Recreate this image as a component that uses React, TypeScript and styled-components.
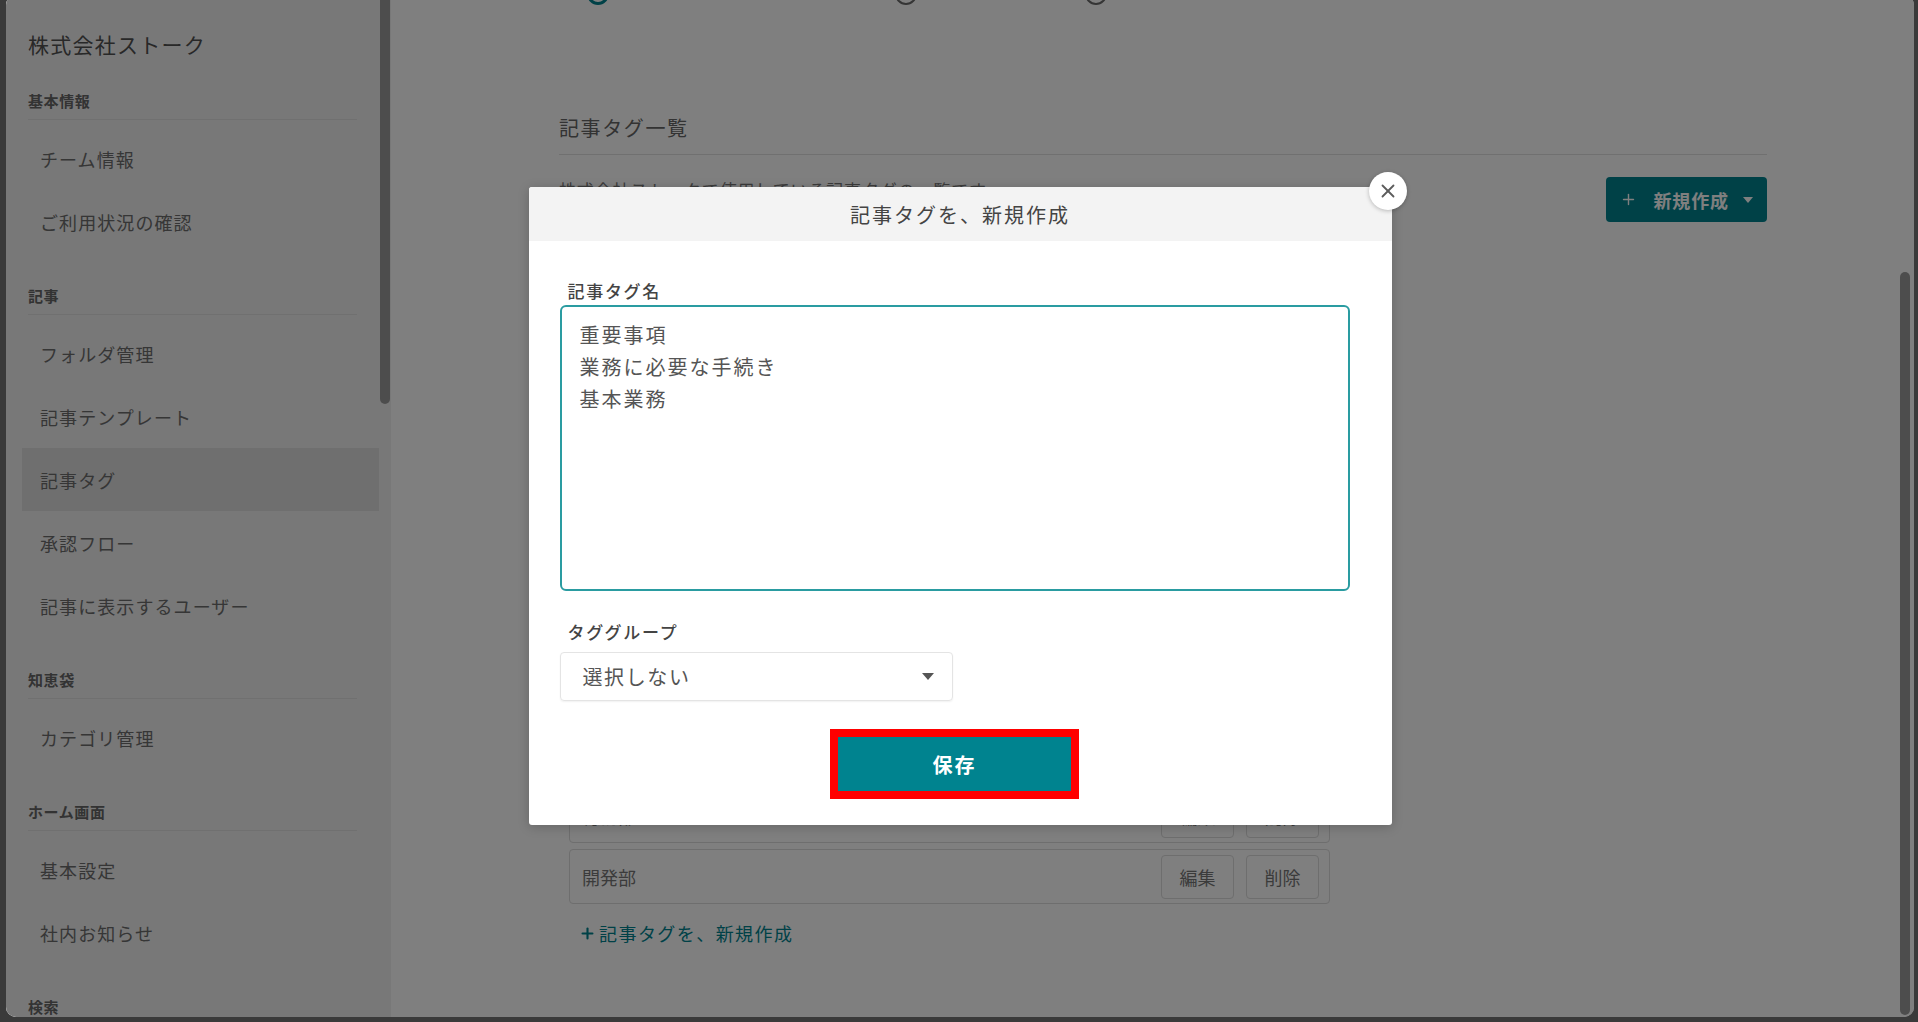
import React from "react";
import styled, { createGlobalStyle } from "styled-components";
import { Plus, X } from "lucide-react";

const GlobalStyle = createGlobalStyle`
  html, body {
    margin: 0;
    padding: 0;
  }
  body {
    background: #3a3a3a;
    font-family: "Noto Sans CJK JP", "Noto Sans", sans-serif;
    overflow: hidden;
  }
  * {
    box-sizing: border-box;
  }
`;

const Frame = styled.div`
  width: 1918px;
  height: 1022px;
  padding: 0 4px 5px 6px;
  overflow: hidden;
`;

const Window = styled.div`
  position: relative;
  display: flex;
  height: 1022px;
  margin-top: -5px;
  border-radius: 10px;
  overflow: hidden;
  background: #fff;
`;

/* ---------- sidebar ---------- */

const Sidebar = styled.aside`
  position: relative;
  flex: 0 0 385px;
  padding: 34px 12px 0 16px;
  background: #f0f0f0;
  overflow: hidden;
`;

const ScrollThumb = styled.div<{ $top: number; $height: number; $right: number }>`
  position: absolute;
  top: ${(p) => p.$top}px;
  right: ${(p) => p.$right}px;
  width: 10px;
  height: ${(p) => p.$height}px;
  border-radius: 5px;
  background: #9b9b9b;
`;

const Company = styled.div`
  padding-left: 6px;
  margin-bottom: 32px;
  font-size: 21px;
  line-height: 30px;
  color: #505050;
  letter-spacing: 0.06em;
`;

const Section = styled.section`
  & + & {
    margin-top: 33px;
  }
`;

const SectionLabel = styled.div`
  margin: 0 22px 0 6px;
  padding-bottom: 8px;
  font-size: 15px;
  font-weight: 700;
  line-height: 20px;
  color: #666;
  letter-spacing: 0.04em;
  border-bottom: 1px solid #e0e0e0;
`;

const NavList = styled.ul`
  list-style: none;
  margin: 0;
  padding: 7px 0 0;
`;

const NavItem = styled.li<{ $active?: boolean }>`
  display: flex;
  align-items: center;
  height: 63px;
  padding-left: 18px;
  font-size: 18px;
  color: #6c6c6c;
  letter-spacing: 0.06em;
  background: ${(p) => (p.$active ? "#dedede" : "transparent")};
`;

/* ---------- main ---------- */

const Main = styled.main`
  position: relative;
  flex: 1;
  padding-left: 168px;
`;

const Content = styled.div`
  width: 1208px;
`;

const RadioRow = styled.div`
  display: flex;
  align-items: center;
  height: 22px;
  margin-top: -12px;
  padding-left: 28px;
`;

const Radio = styled.span<{ $checked?: boolean }>`
  display: inline-block;
  width: 22px;
  height: 22px;
  border-radius: 50%;
  border: ${(p) => (p.$checked ? "3px solid #00838f" : "2px solid #6a6a6a")};
`;

const RadioText = styled.span<{ $width: number }>`
  width: ${(p) => p.$width}px;
  margin-left: 10px;
  font-size: 17px;
  color: #777;
  white-space: nowrap;
  transform: translateY(-11px);
`;

const Heading = styled.h2`
  margin: 109px 0 0;
  padding-bottom: 12px;
  font-size: 20px;
  font-weight: 400;
  line-height: 28px;
  color: #666;
  letter-spacing: 0.08em;
  border-bottom: 1px solid #e0e0e0;
`;

const ToolRow = styled.div`
  display: flex;
  justify-content: space-between;
  align-items: flex-start;
  padding-top: 22px;
`;

const Description = styled.p`
  margin: 1px 0 0;
  font-size: 17px;
  line-height: 24px;
  color: #777;
  letter-spacing: 0.05em;
`;

const CreateButton = styled.button`
  display: flex;
  align-items: center;
  height: 45px;
  padding: 0 14px;
  border: none;
  border-radius: 4px;
  background: #00838f;
  color: #fff;
  font-family: inherit;
  font-size: 18px;
  font-weight: 700;
  letter-spacing: 0.05em;

  span {
    margin: 0 14px 0 16px;
  }
`;

const Caret = styled.i<{ $color: string; $size: number }>`
  display: inline-block;
  width: 0;
  height: 0;
  border-left: ${(p) => p.$size}px solid transparent;
  border-right: ${(p) => p.$size}px solid transparent;
  border-top: ${(p) => p.$size + 1}px solid ${(p) => p.$color};
`;

const TagList = styled.div`
  display: flex;
  flex-direction: column;
  gap: 6px;
  margin-top: 505px;
  padding-left: 10px;
`;

const TagRow = styled.div`
  display: flex;
  align-items: center;
  justify-content: space-between;
  width: 761px;
  height: 55px;
  padding: 0 10px 0 12px;
  border: 1px solid #dcdcdc;
  border-radius: 4px;
  font-size: 18px;
  color: #777;
`;

const RowActions = styled.div`
  display: flex;
  gap: 12px;
`;

const RowButton = styled.button`
  width: 73px;
  height: 44px;
  border: 1px solid #dcdcdc;
  border-radius: 4px;
  background: #fff;
  font-family: inherit;
  font-size: 18px;
  color: #777;
`;

const AddLink = styled.div`
  display: flex;
  align-items: center;
  gap: 3px;
  margin-top: 17px;
  padding-left: 20px;
  font-size: 18px;
  line-height: 24px;
  color: #00838f;
  letter-spacing: 0.08em;
`;

/* ---------- modal ---------- */

const Overlay = styled.div`
  position: absolute;
  inset: 0;
  display: flex;
  align-items: center;
  justify-content: center;
  background: rgba(0, 0, 0, 0.5);
`;

const Modal = styled.div`
  position: relative;
  width: 863px;
  border-radius: 3px;
  background: #fff;
  box-shadow: 0 2px 12px rgba(0, 0, 0, 0.2);
`;

const CloseButton = styled.button`
  position: absolute;
  top: -15px;
  right: -15px;
  display: flex;
  align-items: center;
  justify-content: center;
  width: 38px;
  height: 38px;
  padding: 0;
  border: none;
  border-radius: 50%;
  background: #fff;
  color: #5c5c5c;
  box-shadow: 0 1px 4px rgba(0, 0, 0, 0.25);
`;

const ModalHeader = styled.div`
  display: flex;
  align-items: center;
  justify-content: center;
  height: 54px;
  border-radius: 3px 3px 0 0;
  background: #f3f3f3;
  font-size: 20px;
  color: #444;
  letter-spacing: 0.1em;
`;

const ModalBody = styled.div`
  width: 821px;
  padding: 38px 0 26px 31px;
`;

const FieldLabel = styled.label<{ $gap: number }>`
  display: block;
  margin-top: ${(p) => p.$gap}px;
  padding-left: 8px;
  font-size: 17px;
  font-weight: 500;
  line-height: 24px;
  color: #444;
  letter-spacing: 0.1em;
`;

const TagTextarea = styled.textarea`
  display: block;
  width: 790px;
  height: 286px;
  margin-top: 2px;
  padding: 12px 18px;
  border: 2px solid #2a9ca1;
  border-radius: 6px;
  outline: none;
  resize: none;
  font-family: inherit;
  font-size: 20px;
  line-height: 32px;
  color: #555;
  letter-spacing: 0.1em;
`;

const SelectBox = styled.div`
  display: flex;
  align-items: center;
  justify-content: space-between;
  width: 393px;
  height: 49px;
  margin-top: 8px;
  padding: 0 18px 0 22px;
  border: 1px solid #e4e4e4;
  border-radius: 4px;
  box-shadow: 0 1px 2px rgba(0, 0, 0, 0.06);
  font-size: 20px;
  color: #555;
  letter-spacing: 0.08em;
`;

const SaveArea = styled.div`
  display: flex;
  justify-content: center;
  width: 790px;
  margin-top: 28px;
`;

const Highlight = styled.div`
  border: 8px solid #ff0000;
`;

const SaveButton = styled.button`
  display: block;
  width: 233px;
  height: 54px;
  border: none;
  background: #00838f;
  color: #fff;
  font-family: inherit;
  font-size: 20px;
  font-weight: 700;
  letter-spacing: 0.1em;
`;

const sections = [
  { label: "基本情報", items: ["チーム情報", "ご利用状況の確認"] },
  {
    label: "記事",
    items: ["フォルダ管理", "記事テンプレート", "記事タグ", "承認フロー", "記事に表示するユーザー"],
  },
  { label: "知恵袋", items: ["カテゴリ管理"] },
  { label: "ホーム画面", items: ["基本設定", "社内お知らせ"] },
  { label: "検索", items: [] as string[] },
];

const tags = ["営業部", "総務部", "開発部"];

const App = () => {
  return (
    <>
      <GlobalStyle />
      <Frame>
        <Window>
          <Sidebar>
            <ScrollThumb $top={0} $height={409} $right={1} />
            <Company>株式会社ストーク</Company>
            {sections.map((s) => (
              <Section key={s.label}>
                <SectionLabel>{s.label}</SectionLabel>
                <NavList>
                  {s.items.map((item) => (
                    <NavItem key={item} $active={item === "記事タグ"}>
                      {item}
                    </NavItem>
                  ))}
                </NavList>
              </Section>
            ))}
          </Sidebar>

          <Main>
            <Content>
              <RadioRow>
                <Radio $checked />
                <RadioText $width={276}>すべてのメンバーに公開する</RadioText>
                <Radio />
                <RadioText $width={158}>管理者のみ</RadioText>
                <Radio />
                <RadioText $width={80}>非公開</RadioText>
              </RadioRow>

              <Heading>記事タグ一覧</Heading>

              <ToolRow>
                <Description>株式会社ストークで使用している記事タグの一覧です。</Description>
                <CreateButton>
                  <Plus size={17} strokeWidth={2} />
                  <span>新規作成</span>
                  <Caret $color="#fff" $size={5} />
                </CreateButton>
              </ToolRow>

              <TagList>
                {tags.map((t) => (
                  <TagRow key={t}>
                    {t}
                    <RowActions>
                      <RowButton>編集</RowButton>
                      <RowButton>削除</RowButton>
                    </RowActions>
                  </TagRow>
                ))}
              </TagList>

              <AddLink>
                <Plus size={17} strokeWidth={3} />
                記事タグを、新規作成
              </AddLink>
            </Content>
            <ScrollThumb $top={277} $height={743} $right={4} />
          </Main>

          <Overlay>
            <Modal>
              <CloseButton aria-label="閉じる">
                <X size={22} strokeWidth={2} />
              </CloseButton>
              <ModalHeader>記事タグを、新規作成</ModalHeader>
              <ModalBody>
                <FieldLabel $gap={0}>記事タグ名</FieldLabel>
                <TagTextarea readOnly value={"重要事項\n業務に必要な手続き\n基本業務"} />
                <FieldLabel $gap={29}>タググループ</FieldLabel>
                <SelectBox>
                  選択しない
                  <Caret $color="#555" $size={6} />
                </SelectBox>
                <SaveArea>
                  <Highlight>
                    <SaveButton>保存</SaveButton>
                  </Highlight>
                </SaveArea>
              </ModalBody>
            </Modal>
          </Overlay>
        </Window>
      </Frame>
    </>
  );
};

export default App;
